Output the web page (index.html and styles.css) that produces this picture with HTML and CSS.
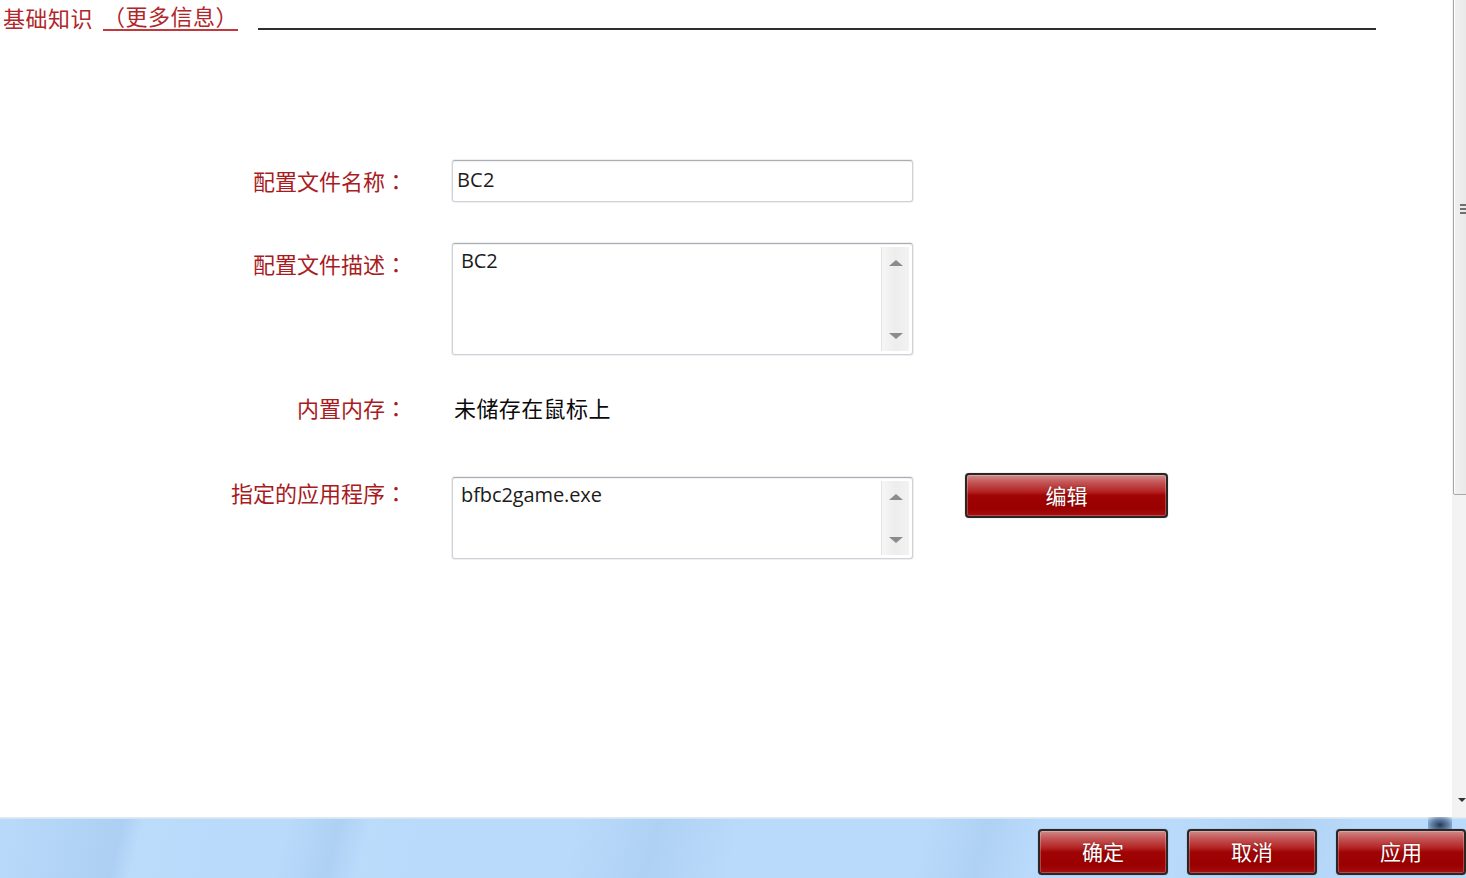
FILE: index.html
```html
<!DOCTYPE html>
<html lang="zh-CN">
<head>
<meta charset="utf-8">
<title>配置文件</title>
<link rel="stylesheet" href="styles.css">
</head>
<body>
<div class="page">
  <div class="main">
    <div class="content">
      <header class="title-row">
        <span class="title">基础知识</span>
        <a class="more">（更多信息）</a>
        <span class="rule"></span>
      </header>
      <div class="form">
        <div class="row row-name">
          <label class="label">配置文件名称<span class="colon" lang="ja">：</span></label>
          <div class="field input"><span class="val">BC2</span></div>
        </div>
        <div class="row row-desc">
          <label class="label">配置文件描述<span class="colon" lang="ja">：</span></label>
          <div class="field textarea tall">
            <span class="val">BC2</span>
            <div class="sbar"><span class="arr up"></span><span class="arr down"></span></div>
          </div>
        </div>
        <div class="row row-mem">
          <label class="label">内置内存<span class="colon" lang="ja">：</span></label>
          <div class="plain">未储存在鼠标上</div>
        </div>
        <div class="row row-app">
          <label class="label">指定的应用程序<span class="colon" lang="ja">：</span></label>
          <div class="field textarea short">
            <span class="val">bfbc2game.exe</span>
            <div class="sbar"><span class="arr up"></span><span class="arr down"></span></div>
          </div>
          <button class="btn edit">编辑</button>
        </div>
      </div>
    </div>
    <div class="vscroll">
      <div class="thumb"><span class="grip"></span></div>
      <span class="vdown"></span>
    </div>
  </div>
  <footer class="footer">
    <span class="shade"></span>
    <button class="btn fbtn">确定</button>
    <button class="btn fbtn">取消</button>
    <button class="btn fbtn">应用</button>
  </footer>
</div>
</body>
</html>
```
FILE: styles.css
```css
* { box-sizing: border-box; }
html, body { margin: 0; padding: 0; }
body {
  width: 1466px;
  height: 878px;
  overflow: hidden;
  background: #fff;
  font-family: "Noto Sans CJK SC", "Noto Sans", sans-serif;
}
.page { display: flex; flex-direction: column; height: 878px; }
.main { display: flex; height: 818px; border-bottom: 1px solid #e6e8ea; }
.content { flex: 1; position: relative; }

.title-row {
  display: flex;
  align-items: flex-start;
  height: 40px;
  padding-left: 3px;
  padding-top: 3px;
}
.title, .more {
  color: #b0262a;
  font-size: 22px;
  line-height: 28px;
  letter-spacing: 0.5px;
}
.more {
  margin-left: 10px;
  border-bottom: 2px solid #c0393c;
  line-height: 25px;
  height: 28px;
}
.rule {
  margin-left: 20px;
  margin-top: 25px;
  width: 1118px;
  height: 2px;
  background: #2e2e2e;
}

.form { display: flex; flex-direction: column; padding-top: 120px; }
.row { display: flex; align-items: flex-start; }
.row-desc { margin-top: 41px; }
.row-mem { margin-top: 41px; }
.row-app { margin-top: 58px; }

.label {
  width: 407px;
  text-align: right;
  color: #a81b1e;
  font-size: 22px;
  line-height: 24px;
  padding-top: 8px;
}
.colon { font-family: "Noto Sans CJK JP", sans-serif; }
.row-mem .label { padding-top: 0; margin-top: -1px; }
.row-app .label { padding-top: 3px; }

.field {
  margin-left: 45px;
  width: 461px;
  border: 1px solid #cfd3d8;
  border-top-color: #a9aeb3;
  border-radius: 3px;
  background: #fff;
  box-shadow: inset 0 1px 1px rgba(0,0,0,0.06), 0 0 0 1px rgba(220,224,230,0.5);
  position: relative;
}
.input { height: 42px; padding: 6px 4px; }
.textarea { padding: 4px 8px; }
.tall { height: 112px; }
.short { height: 82px; }
.val {
  font-family: "Open Sans", "Noto Sans", sans-serif;
  font-size: 20px;
  line-height: 26px;
  color: #1b1b1b;
  letter-spacing: -0.1px;
}
.input .val { letter-spacing: 0.2px; }

.sbar {
  position: absolute;
  right: 3px;
  top: 3px;
  bottom: 3px;
  width: 28px;
  background: linear-gradient(90deg, #f6f6f6, #ededed 50%, #f2f2f2);
  border-left: 1px solid #e4e4e4;
  display: flex;
  flex-direction: column;
  align-items: center;
  justify-content: space-between;
  padding: 13px 0 12px;
}
.arr { width: 0; height: 0; border-left: 7px solid transparent; border-right: 7px solid transparent; }
.arr.up { border-bottom: 6px solid #8c8c8c; }
.arr.down { border-top: 6px solid #8c8c8c; }

.plain {
  margin-left: 47px;
  margin-top: -1px;
  font-size: 22px;
  line-height: 24px;
  color: #0a0a0a;
  letter-spacing: 0.4px;
}

.btn {
  font-family: "Noto Sans CJK SC", sans-serif;
  color: #fff;
  font-size: 21px;
  border: 2px solid #2b2626;
  border-radius: 4px;
  padding: 0;
  background:
    linear-gradient(180deg, #cf8a8a 0%, #c35555 18%, #b42525 40%, #a00404 50%, #9a0000 82%, #a61010 100%);
  box-shadow: inset 0 0 0 1px rgba(255,255,255,0.25), 0 0 1px rgba(0,0,0,0.5);
  text-shadow: 0 0 2px rgba(0,0,0,0.35);
}
.edit {
  margin-left: 52px;
  margin-top: -4px;
  width: 203px;
  height: 45px;
  padding-bottom: 2px;
}

.vscroll {
  width: 14px;
  height: 817px;
  position: relative;
  background: #f3f3f3;
}
.thumb {
  position: absolute;
  left: 1px;
  top: -2px;
  right: -4px;
  height: 497px;
  border: 1px solid #a7a7a7;
  border-radius: 2px;
  background: linear-gradient(90deg, #f0f0f0, #e8e8e8);
  box-shadow: inset 1px 0 0 #fff;
}
.grip {
  position: absolute;
  left: 6px;
  top: 205px;
  width: 8px;
  height: 11px;
  background: repeating-linear-gradient(180deg, #707070 0 2px, transparent 2px 4px);
}
.vdown {
  position: absolute;
  right: 0;
  top: 798px;
  border-left: 4px solid transparent;
  border-right: 4px solid transparent;
  border-top: 4px solid #333;
}

.footer {
  position: relative;
  flex: 1;
  display: flex;
  justify-content: flex-end;
  align-items: flex-start;
  gap: 19px;
  padding-top: 10px;
  border-top: 1px solid #cde6fb;
  background:
    linear-gradient(104deg,
      rgba(170,205,240,0.0) 0px, rgba(165,200,238,0.5) 100px, rgba(165,200,238,0.6) 120px,
      rgba(190,222,252,0.4) 140px, rgba(190,222,252,0) 220px,
      rgba(165,200,238,0.0) 280px, rgba(165,200,238,0.55) 330px, rgba(190,222,252,0.3) 360px,
      rgba(190,222,252,0) 420px,
      rgba(165,200,238,0) 560px, rgba(165,200,238,0.5) 640px, rgba(190,222,252,0) 720px,
      rgba(165,200,238,0) 900px, rgba(165,200,238,0.5) 960px, rgba(190,222,252,0) 1010px,
      rgba(165,200,238,0) 1150px, rgba(165,200,238,0.5) 1250px, rgba(190,222,252,0) 1320px),
    #b9dafa;
}
.shade {
  position: absolute;
  left: 1428px;
  top: -2px;
  width: 24px;
  height: 16px;
  background: radial-gradient(ellipse at center, rgba(20,40,70,0.9) 0%, rgba(40,70,110,0.6) 50%, rgba(80,120,170,0) 100%);
}
.fbtn {
  width: 130px;
  height: 46px;
  position: relative;
  padding-bottom: 2px;
}
```
